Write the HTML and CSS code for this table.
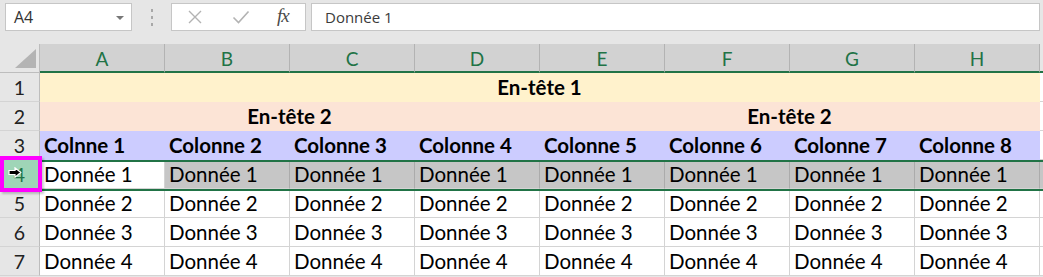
FILE: index.html
```html
<!DOCTYPE html>
<html lang="fr">
<head>
<meta charset="utf-8">
<title>Feuille</title>
<link rel="stylesheet" href="styles.css">
</head>
<body>
<div class="toolbar">
  <div class="namebox"><span>A4</span><span class="caret"></span></div>
  <div class="grip"><i></i><i></i><i></i></div>
  <div class="fbuttons">
    <svg class="ico" width="16" height="14" viewBox="0 0 16 14"><path d="M2 1 L14 13 M14 1 L2 13" stroke="#b3b3b3" stroke-width="1.4" fill="none"/></svg>
    <svg class="ico" width="18" height="14" viewBox="0 0 18 14"><path d="M1.5 7.5 L6.5 12.5 L16.5 1.5" stroke="#b3b3b3" stroke-width="1.6" fill="none"/></svg>
    <span class="fx">fx</span>
  </div>
  <div class="finput">Donnée 1</div>
</div>
<div class="sheet">
  <div class="corner"><svg width="39" height="28" viewBox="0 0 39 28"><polygon points="15,24 36,24 36,5" fill="#b4b4b4"/></svg></div>
  <div class="ch">A</div><div class="ch">B</div><div class="ch">C</div><div class="ch">D</div>
  <div class="ch">E</div><div class="ch">F</div><div class="ch">G</div><div class="ch">H</div>
  <div class="ch ch-off"></div>

  <div class="rh">1</div>
  <div class="c f1 b center span8">En-tête 1</div>
  <div class="c"></div>

  <div class="rh">2</div>
  <div class="c f2 b center span4">En-tête 2</div>
  <div class="c f2 b center span4">En-tête 2</div>
  <div class="c"></div>

  <div class="rh">3</div>
  <div class="c f3 b">Colnne 1</div><div class="c f3 b">Colonne 2</div><div class="c f3 b">Colonne 3</div><div class="c f3 b">Colonne 4</div>
  <div class="c f3 b">Colonne 5</div><div class="c f3 b">Colonne 6</div><div class="c f3 b">Colonne 7</div><div class="c f3 b">Colonne 8</div>
  <div class="c"></div>

  <div class="rh rh-sel">4</div>
  <div class="c">Donnée 1</div>
  <div class="c sel">Donnée 1</div><div class="c sel">Donnée 1</div><div class="c sel">Donnée 1</div><div class="c sel">Donnée 1</div>
  <div class="c sel">Donnée 1</div><div class="c sel">Donnée 1</div><div class="c sel">Donnée 1</div>
  <div class="c sel"></div>

  <div class="rh">5</div>
  <div class="c">Donnée 2</div><div class="c">Donnée 2</div><div class="c">Donnée 2</div><div class="c">Donnée 2</div>
  <div class="c">Donnée 2</div><div class="c">Donnée 2</div><div class="c">Donnée 2</div><div class="c">Donnée 2</div>
  <div class="c"></div>

  <div class="rh">6</div>
  <div class="c">Donnée 3</div><div class="c">Donnée 3</div><div class="c">Donnée 3</div><div class="c">Donnée 3</div>
  <div class="c">Donnée 3</div><div class="c">Donnée 3</div><div class="c">Donnée 3</div><div class="c">Donnée 3</div>
  <div class="c"></div>

  <div class="rh">7</div>
  <div class="c">Donnée 4</div><div class="c">Donnée 4</div><div class="c">Donnée 4</div><div class="c">Donnée 4</div>
  <div class="c">Donnée 4</div><div class="c">Donnée 4</div><div class="c">Donnée 4</div><div class="c">Donnée 4</div>
  <div class="c"></div>

  <div class="selection"></div>
  <div class="marker">
    <svg width="14" height="11" viewBox="0 0 14 11"><path d="M1 3.5 H7 V0.8 L12.8 5.5 L7 10.2 V7.5 H1 Z" fill="#000" stroke="#fff" stroke-width="1.2" stroke-linejoin="miter"/></svg>
  </div>
</div>
</body>
</html>
```

FILE: styles.css
```css
* { box-sizing: border-box; }
html, body { margin: 0; padding: 0; }
body {
  width: 1043px;
  height: 277px;
  overflow: hidden;
  background: #e6e6e6;
  font-family: "Open Sans", "Noto Sans", sans-serif;
}

/* ---------- formula bar ---------- */
.toolbar {
  height: 44px;
  display: flex;
  align-items: flex-start;
  padding: 3px 3px 0 5px;
}
.namebox {
  width: 127px;
  height: 28px;
  background: #fff;
  border: 1px solid #c6c6c6;
  display: flex;
  align-items: center;
  justify-content: space-between;
  padding: 0 7px 0 8px;
  font-size: 16px;
  color: #333;
}
.caret {
  width: 0; height: 0;
  border-left: 4px solid transparent;
  border-right: 4px solid transparent;
  border-top: 4px solid #777;
  margin-top: 1px;
}
.grip {
  width: 39px;
  height: 28px;
  display: flex;
  flex-direction: column;
  align-items: center;
  justify-content: center;
  gap: 4px;
}
.grip i {
  display: block;
  width: 2px; height: 3px;
  background: #a8a8a8;
}
.fbuttons {
  width: 135px;
  height: 28px;
  background: #fff;
  border: 1px solid #c6c6c6;
  display: flex;
  align-items: center;
  padding-left: 15px;
}
.fbuttons .ico { display: block; }
.fbuttons .ico:nth-child(1) { margin-right: 29px; }
.fbuttons .ico:nth-child(2) { margin-right: 27px; }
.fx {
  font-family: "Liberation Serif", "DejaVu Serif", serif;
  font-style: italic;
  font-size: 19px;
  color: #4a4a4a;
  letter-spacing: -1px;
  margin-top: -2px;
}
.finput {
  flex: 1;
  height: 28px;
  margin-left: 5px;
  background: #fff;
  border: 1px solid #c6c6c6;
  font-size: 15px;
  color: #3b3b3b;
  line-height: 26px;
  padding-left: 13px;
}

/* ---------- sheet ---------- */
.sheet {
  position: relative;
  display: grid;
  grid-template-columns: 40px repeat(8, 125px) 1fr;
  grid-template-rows: 29px repeat(7, 29px);
  background: #fff;
  font-family: "Lato", "Liberation Sans", sans-serif;
  font-size: 20.5px;
  color: #000;
}
.corner {
  background: #e6e6e6;
  border-right: 1px solid #bdbdbd;
  border-bottom: 1px solid #bdbdbd;
}
.corner svg { display: block; }
.ch {
  background: #d2d2d2;
  color: #217346;
  border-right: 1px solid #b3b3b3;
  border-bottom: 2px solid #217346;
  display: flex;
  align-items: center;
  justify-content: center;
  font-size: 19px;
  padding-top: 1px;
}
.ch-off {
  background: #e6e6e6;
  border-right: none;
}
.rh {
  background: #e6e6e6;
  color: #222;
  border-right: 1px solid #bdbdbd;
  border-bottom: 1px solid #d4d4d4;
  display: flex;
  align-items: center;
  justify-content: center;
  font-size: 19.5px;
}
.rh-sel {
  background: #9fd5b7;
  color: #217346;
}
.c {
  border-right: 1px solid #d4d4d4;
  border-bottom: 1px solid #d4d4d4;
  display: flex;
  align-items: center;
  padding-left: 4px;
  white-space: nowrap;
  overflow: hidden;
}
.b { font-weight: 700; }
.center { justify-content: center; padding-left: 0; }
.span8 { grid-column: span 8; }
.span4 { grid-column: span 4; }
.f1 { background: #fff2cc; border-color: transparent; }
.f2 { background: #fce4d6; border-color: transparent; }
.f3 { background: #ccccff; border-color: transparent; }
.sel {
  background: #c6c6c6;
  border-right-color: #ababab;
}

/* selection outline of row 4 (overlay) */
.selection {
  position: absolute;
  left: 40px;
  right: 0;
  top: 116px;
  height: 31px;
  border-top: 2px solid #217346;
  border-bottom: 2px solid #217346;
  pointer-events: none;
}
/* magenta highlight around the row header (overlay) */
.marker {
  position: absolute;
  left: 0;
  top: 112px;
  width: 42px;
  height: 36px;
  border: 4px solid #ff00ff;
  box-shadow: 2px 2px 2px rgba(0,0,0,0.2);
  display: flex;
  align-items: center;
  padding-left: 4px;
}
.marker svg { display: block; margin-top: -3px; }
```
